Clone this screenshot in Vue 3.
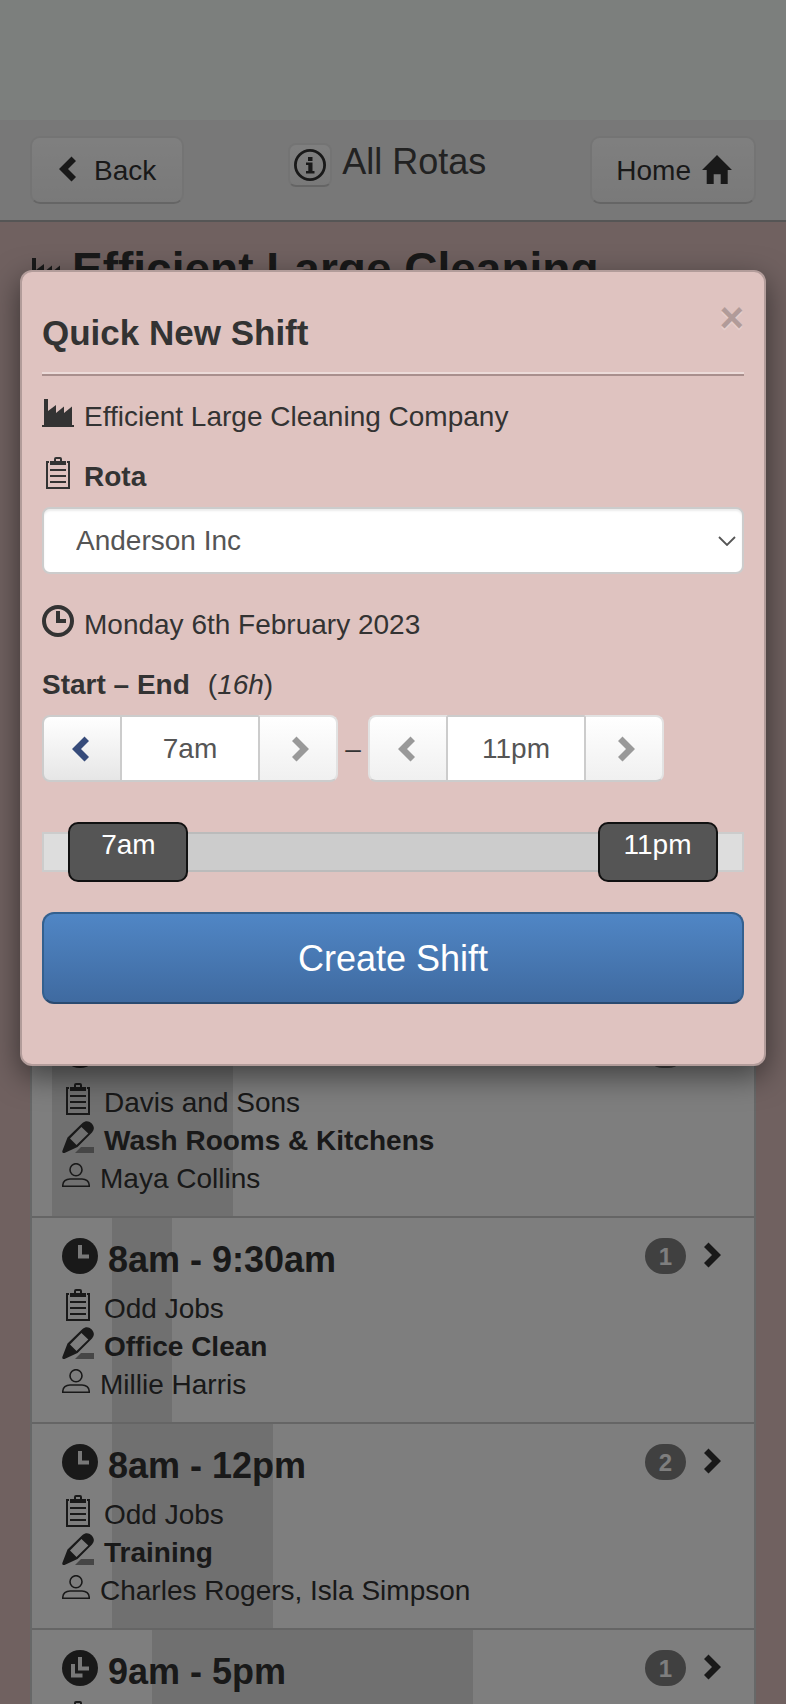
<script setup>
import { ref, computed } from 'vue'

const rota = ref('Anderson Inc')
const start = ref(7)
const end = ref(23)

// The slider leaves a little room on both sides of the working day.
const dayMin = 6.2
const dayMax = 23.8

const formatHour = (hour) => {
  const half = hour % 12 || 12
  return `${half}${hour < 12 ? 'am' : 'pm'}`
}
const place = (hour) => (hour - dayMin) / (dayMax - dayMin)
const handleLeft = (hour) => `calc((100% - 120px) * ${place(hour)})`

const startLabel = computed(() => formatHour(start.value))
const endLabel = computed(() => formatHour(end.value))
const duration = computed(() => `${end.value - start.value}h`)
const fillStyle = computed(() => ({
  left: `calc((100% - 120px) * ${place(start.value)} + 60px)`,
  right: `calc((100% - 120px) * ${1 - place(end.value)} + 60px)`
}))

const shifts = [
  { from: 6.5, to: 11, time: '6:30am - 11am', rota: 'Davis and Sons', task: 'Wash Rooms & Kitchens', people: 'Maya Collins', count: 1 },
  { from: 8, to: 9.5, time: '8am - 9:30am', rota: 'Odd Jobs', task: 'Office Clean', people: 'Millie Harris', count: 1 },
  { from: 8, to: 12, time: '8am - 12pm', rota: 'Odd Jobs', task: 'Training', people: 'Charles Rogers, Isla Simpson', count: 2 },
  { from: 9, to: 17, time: '9am - 5pm', rota: '', task: '', people: '', count: 1, repeat: true }
]
const shadeStyle = (shift) => ({
  left: `${((shift.from - 6) / 18) * 100}%`,
  width: `${((shift.to - shift.from) / 18) * 100}%`
})
</script>

<template>
  <div class="page">
    <div class="status"></div>
    <header class="bar">
      <button class="btn back" type="button">
        <svg width="17" height="26" viewBox="0 0 17 26"><path d="M12.5 0.5L17 5L9 13L17 21L12.5 25.5L0 13Z" /></svg>
        Back
      </button>
      <div class="bar-title">
        <button class="info" type="button" aria-label="Information">
          <svg width="32" height="32" viewBox="0 0 32 32">
            <circle cx="16" cy="16" r="14.6" fill="none" stroke="currentColor" stroke-width="2.8" />
            <path d="M14 8H18.5V12H14ZM12 13.5H18.5V22H20.5V24.5H12V22H14.3V16H12Z" />
          </svg>
        </button>
        <h1>All Rotas</h1>
      </div>
      <button class="btn home" type="button">
        Home
        <svg width="30" height="29" viewBox="0 0 30 29"><path d="M15 0L30 15H25.7V29H18.7V19.3H11.7V29H4.7V15H0Z" /></svg>
      </button>
    </header>

    <main class="content">
      <h2 class="company">
        <svg width="32" height="28" viewBox="0 0 32 28"><path d="M2 0H6V12L14 6V14L22 7.5V14L30 7.5V26H32V28H0V26H2Z" /></svg>
        <span>Efficient Large Cleaning Company</span>
      </h2>

      <ul class="shifts">
        <li v-for="shift in shifts" :key="shift.time">
          <a class="shift" href="#">
            <span class="shade" :style="shadeStyle(shift)"></span>
            <span class="details">
              <strong class="time">
                <svg width="36" height="36" viewBox="0 0 36 36">
                  <circle cx="18" cy="18" r="18" />
                  <path v-if="shift.repeat" class="cut" d="M9 14H13V23.5H20.5V27.5H9Z" />
                  <path v-if="shift.repeat" d="M14.5 7H20V14H27V21.5H14.5Z" />
                  <path class="cut" d="M16 7H20V16.5H27V20.5H16Z" />
                </svg>
                {{ shift.time }}
              </strong>
              <span class="row">
                <svg class="wide" width="24" height="32" viewBox="0 0 24 32">
                  <path d="M3 5H1V31H23V5H21" fill="none" stroke="currentColor" stroke-width="2" />
                  <path fill-rule="evenodd" d="M4 4H8V2Q8 0 10 0H14Q16 0 16 2V4H20V8H4ZM10 2V4H14V2ZM4 12H20V14H4ZM4 18H20V20H4ZM4 24H20V26H4Z" />
                </svg>
                {{ shift.rota }}
              </span>
              <strong class="row">
                <svg width="32" height="32" viewBox="0 0 32 32">
                  <path class="pencil-line" d="M19 26H32V32H13Z" />
                  <path fill-rule="evenodd" d="M0.5 29.5L5.5 16.5L20.5 2C23.5 -0.7 27 -0.3 29.5 2.2C32.3 5 32.8 8.3 30 11.5L15.5 26L2.5 32Q-0.5 32.5 0.5 29.5ZM8 17.5L14.5 24L26.3 12.6L19.4 6Z" />
                </svg>
                {{ shift.task }}
              </strong>
              <span class="row">
                <svg width="28" height="24" viewBox="0 0 28 24" fill="none">
                  <g fill="none" stroke="currentColor" stroke-width="1.6">
                    <circle cx="14" cy="6.7" r="6" />
                    <path d="M0.8 23.2V22C0.8 18.5 4 16 8 16H20C24 16 27.2 18.5 27.2 22V23.2Z" />
                  </g>
                </svg>
                {{ shift.people }}
              </span>
            </span>
            <span class="badge">{{ shift.count }}</span>
            <svg class="go" width="17" height="26" viewBox="0 0 17 26"><path d="M4.5 0.5L0 5L8 13L0 21L4.5 25.5L17 13Z" /></svg>
          </a>
        </li>
      </ul>
    </main>

    <div class="backdrop">
      <form class="modal" role="dialog" aria-labelledby="dialog-title" @submit.prevent>
        <div class="modal-head">
          <h3 id="dialog-title">Quick New Shift</h3>
          <button class="close" type="button" aria-label="Close">×</button>
        </div>

        <div class="line">
          <svg width="32" height="28" viewBox="0 0 32 28"><path d="M2 0H6V12L14 6V14L22 7.5V14L30 7.5V26H32V28H0V26H2Z" /></svg>
          Efficient Large Cleaning Company
        </div>
        <label class="line strong" for="rota">
          <svg class="wide" width="24" height="32" viewBox="0 0 24 32">
            <path d="M3 5H1V31H23V5H21" fill="none" stroke="currentColor" stroke-width="2" />
            <path fill-rule="evenodd" d="M4 4H8V2Q8 0 10 0H14Q16 0 16 2V4H20V8H4ZM10 2V4H14V2ZM4 12H20V14H4ZM4 18H20V20H4ZM4 24H20V26H4Z" />
          </svg>
          Rota
        </label>
        <div class="select">
          <select id="rota" v-model="rota">
            <option>Anderson Inc</option>
          </select>
          <svg width="18" height="10" viewBox="0 0 18 10"><path d="M1 1L9 9L17 1" fill="none" stroke="currentColor" stroke-width="1.8" /></svg>
        </div>

        <div class="line">
          <svg width="32" height="32" viewBox="0 0 32 32">
            <circle cx="16" cy="16" r="14" fill="none" stroke="currentColor" stroke-width="4" />
            <path d="M14 6H18V14H24V18H14Z" />
          </svg>
          Monday 6th February 2023
        </div>
        <div class="line range-title">
          <strong>Start – End</strong>
          <span>(<em>{{ duration }}</em>)</span>
        </div>

        <div class="steppers">
          <div class="stepper">
            <button class="active" type="button" aria-label="Earlier start">
              <svg width="17" height="26" viewBox="0 0 17 26"><path d="M12.5 0.5L17 5L9 13L17 21L12.5 25.5L0 13Z" /></svg>
            </button>
            <input type="text" aria-label="Start" :value="startLabel" readonly />
            <button type="button" aria-label="Later start">
              <svg width="17" height="26" viewBox="0 0 17 26"><path d="M4.5 0.5L0 5L8 13L0 21L4.5 25.5L17 13Z" /></svg>
            </button>
          </div>
          <span class="dash">–</span>
          <div class="stepper">
            <button type="button" aria-label="Earlier end">
              <svg width="17" height="26" viewBox="0 0 17 26"><path d="M12.5 0.5L17 5L9 13L17 21L12.5 25.5L0 13Z" /></svg>
            </button>
            <input type="text" aria-label="End" :value="endLabel" readonly />
            <button type="button" aria-label="Later end">
              <svg width="17" height="26" viewBox="0 0 17 26"><path d="M4.5 0.5L0 5L8 13L0 21L4.5 25.5L17 13Z" /></svg>
            </button>
          </div>
        </div>

        <div class="slider">
          <div class="track"></div>
          <div class="track fill" :style="fillStyle"></div>
          <input v-model.number="start" type="range" aria-label="Start time" :min="dayMin" :max="dayMax" step="0.1" />
          <input v-model.number="end" type="range" aria-label="End time" :min="dayMin" :max="dayMax" step="0.1" />
          <span class="tip" :style="{ left: handleLeft(start) }">{{ startLabel }}</span>
          <span class="tip" :style="{ left: handleLeft(end) }">{{ endLabel }}</span>
        </div>

        <button class="create" type="submit">Create Shift</button>
      </form>
    </div>
  </div>
</template>

<style>
body {
  margin: 0;
}
</style>

<style scoped>
* {
  box-sizing: border-box;
}
.page {
  position: relative;
  height: 100vh;
  overflow: hidden;
  background: #e0c3c1;
  color: #333;
  font: 28px/38px "Liberation Sans", Arial, sans-serif;
}
h1, h2, h3, ul {
  margin: 0;
  padding: 0;
}
button, input, select {
  margin: 0;
  font: inherit;
  color: inherit;
}
svg {
  flex: none;
  display: block;
  fill: currentColor;
}
.status {
  height: 120px;
  background: #f8fefa;
}
.bar {
  display: flex;
  justify-content: space-between;
  align-items: flex-start;
  height: 102px;
  padding: 16px 30px;
  background: #f0f0f0;
  border-bottom: 2px solid #aaa;
}
.btn {
  display: flex;
  align-items: center;
  height: 68px;
  border: 2px solid #e8e8e8;
  border-bottom-color: #cbcbcb;
  border-radius: 10px;
  background: linear-gradient(#fff, #f3f3f3);
}
.back {
  gap: 18px;
  padding: 2px 26px 0 27px;
}
.home {
  gap: 11px;
  padding: 2px 22px 0 24px;
}
.home svg, .back svg {
  margin-bottom: 4px;
}
.bar-title {
  display: flex;
  gap: 10px;
  padding-top: 7px;
}
.bar-title h1 {
  font-size: 36px;
  font-weight: 400;
  line-height: 38px;
  color: #444;
}
.info {
  display: flex;
  align-items: center;
  justify-content: center;
  width: 44px;
  height: 44px;
  padding: 0;
  border: 2px solid #e8e8e8;
  border-bottom-color: #cbcbcb;
  border-radius: 8px;
  background: linear-gradient(#fff, #f3f3f3);
}
.content {
  padding: 20px 30px 0;
}
.company {
  display: flex;
  gap: 10px;
  font-size: 46px;
  line-height: 54px;
}
.company svg {
  margin-top: 16px;
}
.shifts {
  margin-top: 660px;
  list-style: none;
  background: #fcfcfc;
  border: 2px solid #cfd1d0;
}
.shifts li + li {
  border-top: 2px solid #cbcbcb;
}
.shift {
  position: relative;
  display: flex;
  align-items: flex-start;
  min-height: 204px;
  padding: 20px 33px 18px 30px;
  color: inherit;
  text-decoration: none;
}
.shade {
  position: absolute;
  top: 0;
  bottom: 0;
  background: #e0e0e0;
}
.details {
  position: relative;
  flex: 1;
}
.time, .row {
  display: flex;
  align-items: center;
  gap: 10px;
  height: 38px;
}
.time {
  height: 44px;
  margin-bottom: 8px;
  font-size: 36px;
}
.time svg, .row svg {
  margin-bottom: 8px;
}
.wide {
  width: 32px;
}
.cut {
  fill: #f0f0f0;
}
.pencil-line {
  fill: #8c8c8c;
}
.badge {
  height: 36px;
  padding: 0 14px;
  border-radius: 18px;
  background: #808080;
  color: #fcfcfc;
  font-size: 24px;
  font-weight: 700;
  line-height: 37px;
}
.go {
  margin: 4px 0 0 18px;
}
.backdrop {
  position: absolute;
  inset: 0;
  padding: 270px 20px 0;
  background: rgba(0, 0, 0, 0.5);
}
.modal {
  padding: 0 20px 60px;
  border: 2px solid #b29c9a;
  border-radius: 12px;
  background: #dfc3c0;
  box-shadow: 0 10px 30px rgba(0, 0, 0, 0.5);
}
.modal-head {
  display: flex;
  justify-content: space-between;
  align-items: flex-start;
  height: 104px;
  padding-top: 40px;
  margin-bottom: 11px;
  border-bottom: 2px solid #a98f8d;
  box-shadow: inset 0 -2px #ecdbd9;
}
h3 {
  font-size: 35px;
  line-height: 42px;
}
.close {
  margin-top: -14px;
  padding: 0;
  border: 0;
  background: none;
  color: #000;
  font-size: 42px;
  font-weight: 700;
  line-height: 40px;
  opacity: 0.2;
  text-shadow: 0 2px 0 #fff;
}
.line {
  display: flex;
  align-items: center;
  gap: 10px;
  height: 60px;
}
.line svg {
  margin-bottom: 8px;
}
.strong {
  font-weight: 700;
}
.range-title {
  gap: 18px;
}
.select {
  position: relative;
  margin-bottom: 21px;
  color: #555;
}
select {
  display: block;
  width: 100%;
  height: 67px;
  padding: 0 60px 0 32px;
  appearance: none;
  border: 2px solid #ccc;
  border-radius: 8px;
  background: #fff;
  box-shadow: inset 0 2px 2px rgba(0, 0, 0, 0.075);
}
.select svg {
  position: absolute;
  top: 29px;
  right: 8px;
  pointer-events: none;
}
.steppers {
  display: flex;
  align-items: center;
  margin-bottom: 40px;
}
.stepper {
  display: flex;
  height: 67px;
}
.stepper button {
  display: flex;
  align-items: center;
  justify-content: center;
  width: 80px;
  padding: 0;
  border: 2px solid #e2e2e2;
  border-bottom-color: #ccc;
  background: linear-gradient(#fff, #f0f0f0);
  color: #999;
}
.stepper button:first-child {
  padding-right: 4px;
  border-right-color: #ccc;
  border-radius: 8px 0 0 8px;
}
.stepper button:last-child {
  padding-left: 4px;
  border-left-color: #ccc;
  border-radius: 0 8px 8px 0;
}
.stepper .active {
  border-color: #ccc;
  background: linear-gradient(#fff, #e6e6e6);
  color: #364b7a;
}
.stepper input {
  width: 136px;
  padding: 0;
  border: solid #ccc;
  border-width: 2px 0;
  border-radius: 0;
  background: #fff;
  color: #555;
  text-align: center;
}
.dash {
  width: 30px;
  text-align: center;
}
.slider {
  position: relative;
  height: 60px;
  margin-bottom: 30px;
}
.track {
  position: absolute;
  top: 10px;
  right: 0;
  bottom: 10px;
  left: 0;
  border: 2px solid #ccc;
  background: #ddd;
}
.fill {
  border-color: #bbb;
  background: #ccc;
}
.slider input {
  position: absolute;
  inset: 0;
  width: 100%;
  height: 60px;
  appearance: none;
  background: none;
  pointer-events: none;
}
.slider input::-webkit-slider-thumb {
  box-sizing: border-box;
  width: 120px;
  height: 60px;
  appearance: none;
  border: 2px solid #111;
  border-radius: 10px;
  background: #555;
  pointer-events: auto;
}
.tip {
  position: absolute;
  top: 0;
  width: 120px;
  color: #fff;
  line-height: 46px;
  text-align: center;
  pointer-events: none;
}
.create {
  display: block;
  width: 100%;
  height: 92px;
  padding: 2px 0 0;
  border: 2px solid #33608f;
  border-bottom-color: #2a4a70;
  border-radius: 12px;
  background: linear-gradient(#5086c5, #3f6aa0);
  color: #fff;
  font-size: 36px;
}
</style>
